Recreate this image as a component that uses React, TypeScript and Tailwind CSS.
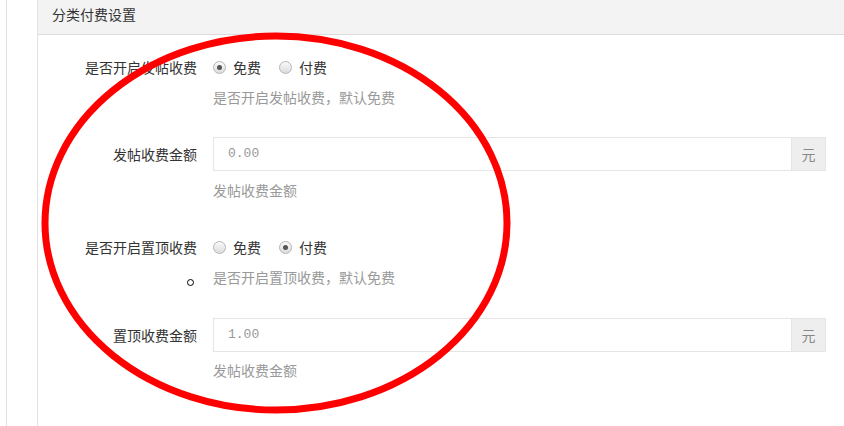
import React from "react";

const font = {
  fontFamily: '"Noto Sans CJK SC", "Liberation Sans", sans-serif',
};

const Radio = ({ checked }: { checked?: boolean }) => (
  <span className="flex h-[13px] w-[13px] items-center justify-center rounded-full border border-[#b5b5b5] bg-gradient-to-b from-[#fafafa] to-[#dcdcdc]">
    {checked && <span className="h-[5px] w-[5px] rounded-full bg-[#555]" />}
  </span>
);

const RadioRow = ({ label, paid }: { label: string; paid?: boolean }) => (
  <div className="flex h-[34px] items-center">
    <div className="w-[159px] text-right text-[14px] text-[#333]">{label}</div>
    <div className="ml-[16px] flex items-center text-[14px] text-[#333]">
      <Radio checked={!paid} />
      <span className="ml-[7px]">免费</span>
      <span className="ml-[18px]" />
      <Radio checked={paid} />
      <span className="ml-[7px]">付费</span>
    </div>
  </div>
);

const AmountRow = ({ label, value }: { label: string; value: string }) => (
  <div className="flex h-[34px] items-center">
    <div className="w-[159px] text-right text-[14px] text-[#333]">{label}</div>
    <div className="ml-[16px] flex h-[34px] w-[613px]">
      <div className="flex flex-1 items-center border border-[#e5e5e5] bg-white pl-[14px] font-mono text-[13px] text-[#999]">
        {value}
      </div>
      <div className="flex w-[34px] items-center justify-center border border-l-0 border-[#e5e5e5] bg-[#eee] text-[14px] text-[#888]">
        元
      </div>
    </div>
  </div>
);

const Help = ({ text, mt }: { text: string; mt: string }) => (
  <div className={`${mt} ml-[175px] h-[20px] text-[14px] leading-[20px] text-[#999]`}>{text}</div>
);

export default function App() {
  return (
    <div className="relative flex h-[426px] w-[844px] overflow-hidden bg-white leading-[20px]" style={font}>
      <div className="w-[6px]" />
      <div className="w-[31px] border-l border-[#e3e3e3]" />
      <div className="flex-1 border-l border-[#e3e3e3]">
        <div className="h-[35px] border-b border-[#dcdcdc] bg-[#f3f3f3] pl-[14px] pt-[4px] text-[14px] text-[#333]">
          分类付费设置
        </div>
        <div className="pt-[15px]">
          <RadioRow label="是否开启发帖收费" />
          <Help text="是否开启发帖收费，默认免费" mt="mt-[3px]" />
          <div className="mt-[30px]">
            <AmountRow label="发帖收费金额" value="0.00" />
          </div>
          <Help text="发帖收费金额" mt="mt-[9px]" />
          <div className="mt-[30px]">
            <RadioRow label="是否开启置顶收费" paid />
          </div>
          <Help text="是否开启置顶收费，默认免费" mt="mt-[3px]" />
          <div className="mt-[31px]">
            <AmountRow label="置顶收费金额" value="1.00" />
          </div>
          <Help text="发帖收费金额" mt="mt-[8px]" />
        </div>
      </div>
      <span className="absolute left-[187px] top-[279px] h-[7px] w-[7px] rounded-full border border-black" />
      <svg className="pointer-events-none absolute left-0 top-0" width="844" height="426">
        <ellipse cx="276" cy="223" rx="231" ry="187" fill="none" stroke="#ff0000" strokeWidth="7" />
      </svg>
    </div>
  );
}
